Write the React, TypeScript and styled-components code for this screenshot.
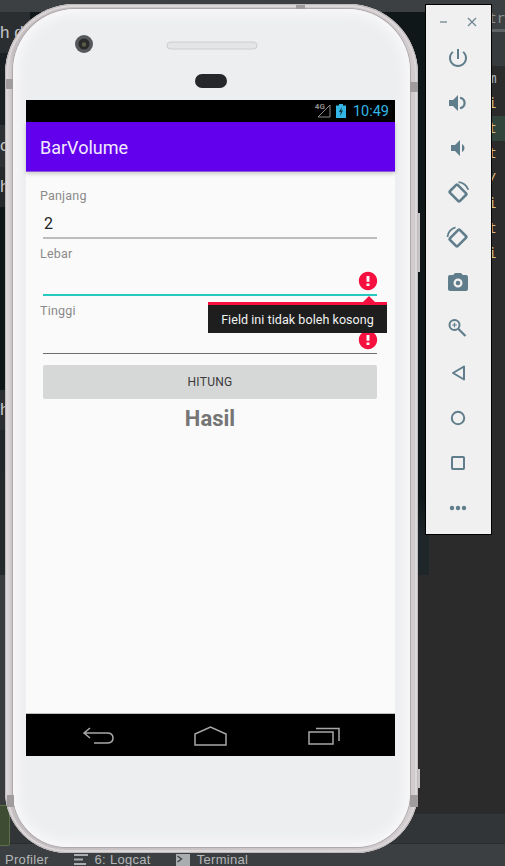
import React from 'react'
import styled, { createGlobalStyle } from 'styled-components'

const GlobalStyle = createGlobalStyle`
  html, body { margin: 0; padding: 0; background: #2b2b2b; }
  body { font-family: Roboto, "Liberation Sans", sans-serif; }
`

const Desktop = styled.div`
  position: relative;
  width: 505px;
  height: 866px;
  overflow: hidden;
  display: flex;
  flex-direction: column;
  background: #2b2b2b;
`

const TitleBar = styled.div`
  height: 12px;
  background: #3c4042;
`

const Workspace = styled.div`
  height: 802px;
  display: flex;
`

const LeftPane = styled.div`
  width: 437px;
  display: flex;
  flex-direction: column;
`

const DarkArea = styled.div`
  height: 563px;
  flex: none;
  background: linear-gradient(180deg, #0f1719 0, #0f1719 86%, #1e262a 93%);
  display: flex;
  flex-direction: column;
`

const LeftRow = styled.div<{ $h: number; $bg: string }>`
  width: 30px;
  height: ${p => p.$h}px;
  flex: none;
  background: ${p => p.$bg};
  color: #c4c6c8;
  font-family: "Liberation Sans", sans-serif;
  font-size: 17px;
  line-height: ${p => p.$h}px;
  white-space: nowrap;
`

const RightPane = styled.div`
  flex: 1;
  display: flex;
  flex-direction: column;
  font-family: "DejaVu Sans Mono", monospace;
  font-size: 14px;
`

const TabRow = styled.div`
  height: 17px;
  padding-left: 51px;
  background: #3c4042;
  color: #8d9295;
  line-height: 12px;
  border-bottom: 3px solid #5f6366;
  white-space: nowrap;
  overflow: hidden;
`

const TabBand = styled.div`
  height: 34px;
  background: #383b3d;
`

const CodeLine = styled.div<{ $on?: boolean; $gray?: boolean }>`
  height: 25px;
  line-height: 25px;
  padding-left: 51px;
  background: ${p => (p.$on ? '#32453d' : 'transparent')};
  color: ${p => (p.$gray ? '#a9b7c6' : '#dcbc7c')};
  white-space: nowrap;
  overflow: hidden;
`

const ToolStrip = styled.div`
  height: 30px;
  background: #323537;
  border-bottom: 1px solid #2a2c2e;
  box-sizing: border-box;
`

const StatusBar = styled.div`
  height: 22px;
  box-sizing: border-box;
  background: #3c3f41;
  display: flex;
  align-items: center;
  padding: 9px 0 0 5px;
  gap: 25px;
  color: #b4b7b9;
  font-family: "Liberation Sans", sans-serif;
  font-size: 13px;
  letter-spacing: 0.3px;
`

const StatusItem = styled.span`
  display: inline-flex;
  align-items: center;
  gap: 7px;
`

const GreenTag = styled.div`
  position: absolute;
  left: -3px;
  top: 805px;
  width: 11px;
  height: 39px;
  background: #3d4c33;
  border: 1px solid #5d7049;
  border-radius: 2px;
`

const Shell = styled.div`
  position: absolute;
  left: 5px;
  top: 4px;
  width: 413px;
  height: 849px;
  box-sizing: border-box;
  padding: 5px 8px 6px 8px;
  border-radius: 70px 70px 62px 62px;
  background: linear-gradient(90deg, #cfc9cb 0, #dbd6d8 3px, #cdc7c9 6px, #c4bec0 8px, #d2cccf 100%);
  box-shadow: inset 0 0 0 1px #bfb9bb, inset 0 0 0 3px #dcd7d9;
`

const Bezel = styled.div`
  height: 100%;
  box-sizing: border-box;
  padding: 0 15px 0 13px;
  border-radius: 62px 62px 54px 54px;
  background: #edeef0;
  box-shadow: 0 0 0 1px #aeA9ab, inset 0 0 12px 5px #f8f8fa;
  display: flex;
  flex-direction: column;
`

const PhoneHead = styled.svg`
  display: block;
  width: 369px;
  height: 91px;
  flex: none;
`

const Screen = styled.div`
  position: relative;
  width: 369px;
  height: 656px;
  display: flex;
  flex-direction: column;
  background: #fafafa;
  flex: none;
`

const Notch = styled.div<{ $x: number; $y: number; $w: number; $h: number }>`
  position: absolute;
  left: ${p => p.$x}px;
  top: ${p => p.$y}px;
  width: ${p => p.$w}px;
  height: ${p => p.$h}px;
  background: #a09b9d;
`

const SideKey = styled.div<{ $y: number; $h: number }>`
  position: absolute;
  left: 418px;
  top: ${p => p.$y}px;
  width: 2px;
  height: ${p => p.$h}px;
  background: #c9c4c6;
`

const PhoneStatus = styled.div`
  height: 22px;
  flex: none;
  background: #000;
  display: flex;
  align-items: center;
  justify-content: flex-end;
  padding-right: 6px;
`

const Clock = styled.span`
  color: #33b5e5;
  font-size: 14.5px;
  margin-left: 7px;
`

const NetBadge = styled.span`
  color: #8c8c8c;
  font-size: 8px;
  font-weight: 700;
  margin: -9px -8px 0 0;
`

const AppBar = styled.div`
  height: 50px;
  flex: none;
  box-sizing: border-box;
  background: #6200ee;
  border-bottom: 1px solid #8a5fd8;
  box-shadow: 0 2px 4px rgba(0, 0, 0, 0.18);
  display: flex;
  align-items: center;
  padding: 2px 14px 0;
  color: #f3eafe;
  font-size: 18px;
  z-index: 1;
`

const Form = styled.div`
  flex: 1;
  display: flex;
  flex-direction: column;
  padding: 16px 18px 0 17px;
`

const Field = styled.div`
  display: flex;
  flex-direction: column;
  margin-bottom: 7px;
`

const FieldLabel = styled.label`
  margin-left: -3px;
  height: 16px;
  line-height: 16px;
  font-size: 12.5px;
  color: #8a8a8a;
  letter-spacing: 0.2px;
`

const InputRow = styled.div<{ $line: string; $weight: number }>`
  height: 34.5px;
  box-sizing: border-box;
  border-bottom: ${p => p.$weight}px solid ${p => p.$line};
  display: flex;
  align-items: flex-end;
  justify-content: space-between;
`

const InputValue = styled.span`
  font-size: 16px;
  line-height: 24px;
  color: #222;
  padding: 0 0 1px 1px;
`

const ErrorIcon = styled.svg`
  width: 22px;
  height: 22px;
  margin: 0 -2px 2px auto;
  fill: #f5103f;
`

const SubmitButton = styled.button`
  height: 34px;
  margin-top: 4px;
  border: 0;
  border-radius: 2px;
  background: #d6d7d7;
  color: #3a3a3a;
  font-family: inherit;
  font-size: 12px;
  letter-spacing: 0.3px;
  padding: 0;
`

const Result = styled.div`
  margin-top: 6px;
  line-height: 28px;
  text-align: center;
  font-size: 22px;
  font-weight: 700;
  color: #757575;
`

const ErrorPopup = styled.div`
  position: absolute;
  left: 182px;
  top: 202px;
  width: 179px;
  height: 31px;
  box-sizing: border-box;
  border-top: 3px solid #f5103f;
  background: #1e1e1e;
  color: #f2f2f2;
  font-size: 12.5px;
  line-height: 30px;
  text-align: center;
  letter-spacing: 0.06px;
  z-index: 2;
  &::before {
    content: '';
    position: absolute;
    left: 155px;
    top: -9px;
    border: 6px solid transparent;
    border-top: 0;
    border-bottom-color: #f5103f;
  }
`

const NavBar = styled.div`
  height: 43px;
  flex: none;
  background: #000;
  border-top: 1px solid #bdbdbd;
  box-sizing: border-box;
  display: flex;
  align-items: center;
  justify-content: space-between;
  padding: 1px 54px 0 56px;
`

const NavIcon = styled.svg<{ $nudge?: number }>`
  width: 33px;
  height: 20px;
  margin-left: ${p => p.$nudge ?? 0}px;
  fill: none;
  stroke: #a8a8a8;
  stroke-width: 1.5;
`

const ControlPanel = styled.div`
  position: absolute;
  left: 425px;
  top: 4px;
  width: 67px;
  height: 531px;
  box-sizing: border-box;
  padding-right: 1px;
  background: #f0f0f0;
  border: 1px solid #000;
  display: flex;
  flex-direction: column;
  align-items: center;
`

const PanelHead = styled.div`
  height: 30px;
  flex: none;
  width: 100%;
  display: flex;
  align-items: center;
  justify-content: center;
  gap: 18px;
  padding-top: 4px;
  box-sizing: border-box;
`

const WindowGlyph = styled.svg`
  width: 10px;
  height: 10px;
  stroke: #6f8792;
  stroke-width: 1.3;
  fill: none;
`

const PanelButton = styled.div`
  height: 45px;
  flex: none;
  display: flex;
  align-items: center;
  justify-content: center;
`

const PanelIcon = styled.svg`
  width: 24px;
  height: 24px;
  fill: #607d8b;
`

const Outline = styled.g`
  fill: none;
  stroke: #607d8b;
  stroke-width: 2;
`

const panelIcons: React.ReactNode[] = [
  <path key="p" d="M13 3h-2v10h2V3zm4.830 2.170l-1.420 1.420C17.990 7.860 19 9.810 19 12c0 3.870-3.130 7-7 7s-7-3.130-7-7c0-2.190 1.010-4.140 2.580-5.420L6.170 5.170C4.230 6.820 3 9.260 3 12c0 4.970 4.030 9 9 9s9-4.030 9-9c0-2.740-1.230-5.180-3.170-6.830z" />,
  <g key="v">
    <path d="M3 9v6h4l5 5V4L7 9H3z" />
    <Outline><path d="M14 6.800c2.700.6 4.600 2.700 4.600 5.200s-1.900 4.600-4.600 5.200" strokeWidth="2.200" /></Outline>
  </g>,
  <path key="d" d="M18.500 12c0-1.770-1.020-3.290-2.500-4.030v8.050c1.480-.73 2.500-2.250 2.500-4.020zM5 9v6h4l5 5V4L9 9H5z" />,
  <Outline key="r1">
    <rect x="5" y="6.500" width="14" height="11" rx="1" transform="rotate(45 12 12)" strokeWidth="2.600" />
    <path d="M12.500 1.200c4.500.1 8.500 3.400 9.800 7.500" strokeWidth="1.800" />
  </Outline>,
  <Outline key="r2">
    <rect x="5" y="6.500" width="14" height="11" rx="1" transform="rotate(-45 12 12)" strokeWidth="2.600" />
    <path d="M1.500 11c.2-4.600 3.600-8.500 8-9.600" strokeWidth="1.800" />
  </Outline>,
  <path key="c" fillRule="evenodd" d="M9 2L7.170 4H4c-1.100 0-2 .9-2 2v12c0 1.100.9 2 2 2h16c1.100 0 2-.9 2-2V6c0-1.100-.9-2-2-2h-3.170L15 2H9zm3 14.500a4.500 4.500 0 1 1 0-9 4.500 4.500 0 0 1 0 9zm0-2.200a2.300 2.300 0 1 0 0-4.600 2.300 2.300 0 0 0 0 4.600z" />,
  <Outline key="z">
    <circle cx="8.500" cy="9" r="5" />
    <path d="M12.500 13l7 7" strokeWidth="2.200" />
    <path d="M8.500 6.700v4.600M6.200 9h4.600" strokeWidth="1.200" />
  </Outline>,
  <Outline key="b"><path d="M18 5.500v13L7 12z" strokeLinejoin="round" /></Outline>,
  <Outline key="h"><circle cx="12" cy="12" r="6.200" /></Outline>,
  <Outline key="s"><rect x="6" y="6" width="12" height="12" rx="0.800" /></Outline>,
  <g key="m">
    <circle cx="6" cy="12" r="2.200" />
    <circle cx="12" cy="12" r="2.200" />
    <circle cx="18" cy="12" r="2.200" />
  </g>,
]

const errorPath = 'M12 2C6.480 2 2 6.480 2 12s4.480 10 10 10 10-4.480 10-10S17.520 2 12 2zm1.600 15.500h-3.200v-2.800h3.200v2.800zm0-4.700h-3.200V6.500h3.200v6.300z'

function App() {
  return (
    <Desktop>
      <GlobalStyle />
      <TitleBar />
      <Workspace>
        <LeftPane>
          <DarkArea>
            <LeftRow $h={41} $bg="#2a2e30">h d</LeftRow>
            <LeftRow $h={72} $bg="#1a2023" />
            <LeftRow $h={42} $bg="#2d3133">c</LeftRow>
            <LeftRow $h={40} $bg="#25292b">h</LeftRow>
            <LeftRow $h={183} $bg="#0f1618" />
            <LeftRow $h={40} $bg="#2b2f31">h</LeftRow>
            <LeftRow $h={43} $bg="#22272a" />
            <LeftRow $h={102} $bg="#24292b" />
          </DarkArea>
          <LeftRow $h={239} $bg="#3a3b3c" />
        </LeftPane>
        <RightPane>
          <TabRow>str</TabRow>
          <TabBand />
          <CodeLine $gray>um</CodeLine>
          <CodeLine>ri</CodeLine>
          <CodeLine $on>st</CodeLine>
          <CodeLine>st</CodeLine>
          <CodeLine>:/</CodeLine>
          <CodeLine>ri</CodeLine>
          <CodeLine>st</CodeLine>
          <CodeLine>ri</CodeLine>
        </RightPane>
      </Workspace>
      <ToolStrip />
      <StatusBar>
        <StatusItem>Profiler</StatusItem>
        <StatusItem>
          <svg width="14" height="11" viewBox="0 0 14 11" fill="#a9adb0">
            <rect width="14" height="2" />
            <rect y="4.500" width="9" height="2" />
            <rect y="9" width="12" height="2" />
          </svg>
          6: Logcat
        </StatusItem>
        <StatusItem>
          <svg width="14" height="12" viewBox="0 0 14 12">
            <rect width="14" height="12" fill="#a9adb0" />
            <path d="M1.500 2l4 3-4 3" stroke="#3c3f41" strokeWidth="1.300" fill="none" />
          </svg>
          Terminal
        </StatusItem>
      </StatusBar>
      <GreenTag />

      <Shell>
        <Bezel>
          <PhoneHead viewBox="0 0 369 91">
            <circle cx="58" cy="35" r="9" fill="#55585c" />
            <circle cx="58" cy="35" r="5.500" fill="#2a2a2a" />
            <circle cx="58" cy="35.500" r="2.200" fill="#5b5a48" />
            <rect x="141" y="33" width="90" height="7" rx="3.500" fill="#e4e5e6" stroke="#c6c7c8" strokeWidth="0.800" />
            <rect x="169" y="65" width="32" height="14" rx="7" fill="#25272a" />
          </PhoneHead>
          <Screen>
            <PhoneStatus>
              <NetBadge>4G</NetBadge>
              <svg width="14" height="14" viewBox="0 0 14 14" fill="none" stroke="#8c8c8c">
                <path d="M13 1v12H1z" />
              </svg>
              <svg width="10" height="14" viewBox="0 0 10 14" style={{ marginLeft: 5 }}>
                <path d="M3 0h4v1.500h3V14H0V1.500h3z" fill="#33b5e5" />
                <path d="M5.800 3L3 8h1.800l-.8 4 3-5.500H5.200z" fill="#10323f" />
              </svg>
              <Clock>10:49</Clock>
            </PhoneStatus>
            <AppBar>BarVolume</AppBar>
            <Form>
              <Field>
                <FieldLabel>Panjang</FieldLabel>
                <InputRow $line="#bdbdbd" $weight={2}>
                  <InputValue>2</InputValue>
                </InputRow>
              </Field>
              <Field>
                <FieldLabel>Lebar</FieldLabel>
                <InputRow $line="#26c9bf" $weight={2}>
                  <ErrorIcon viewBox="0 0 24 24"><path d={errorPath} /></ErrorIcon>
                </InputRow>
              </Field>
              <Field>
                <FieldLabel>Tinggi</FieldLabel>
                <InputRow $line="#6e6e6e" $weight={1.5}>
                  <ErrorIcon viewBox="0 0 24 24"><path d={errorPath} /></ErrorIcon>
                </InputRow>
              </Field>
              <SubmitButton>HITUNG</SubmitButton>
              <Result>Hasil</Result>
            </Form>
            <ErrorPopup>Field ini tidak boleh kosong</ErrorPopup>
            <NavBar>
              <NavIcon viewBox="0 0 33 20">
                <path d="M8 2L2 7l6 5M2 7h23c4 0 6 2 6 5s-2 5-6 5H12" />
              </NavIcon>
              <NavIcon viewBox="0 0 33 20" $nudge={-2}>
                <path d="M1 8L16.500 1 32 8v11H1z" />
              </NavIcon>
              <NavIcon viewBox="0 0 33 20">
                <rect x="1" y="6" width="24" height="12" />
                <path d="M8 2.500h23V15" />
              </NavIcon>
            </NavBar>
          </Screen>
        </Bezel>
      </Shell>
      <Notch $x={6} $y={79} $w={7} $h={10} />
      <Notch $x={410} $y={82} $w={8} $h={10} />
      <Notch $x={296} $y={5} $w={9} $h={4} />
      <Notch $x={7} $y={795} $w={7} $h={12} />
      <Notch $x={410} $y={795} $w={8} $h={12} />
      <SideKey $y={213} $h={59} />
      <SideKey $y={769} $h={19} />

      <ControlPanel>
        <PanelHead>
          <WindowGlyph viewBox="0 0 10 10"><path d="M1 5h7" /></WindowGlyph>
          <WindowGlyph viewBox="0 0 10 10"><path d="M1 1l8 8M9 1l-8 8" /></WindowGlyph>
        </PanelHead>
        {panelIcons.map((icon, i) => (
          <PanelButton key={i}>
            <PanelIcon viewBox="0 0 24 24">{icon}</PanelIcon>
          </PanelButton>
        ))}
      </ControlPanel>
    </Desktop>
  )
}

export default App
